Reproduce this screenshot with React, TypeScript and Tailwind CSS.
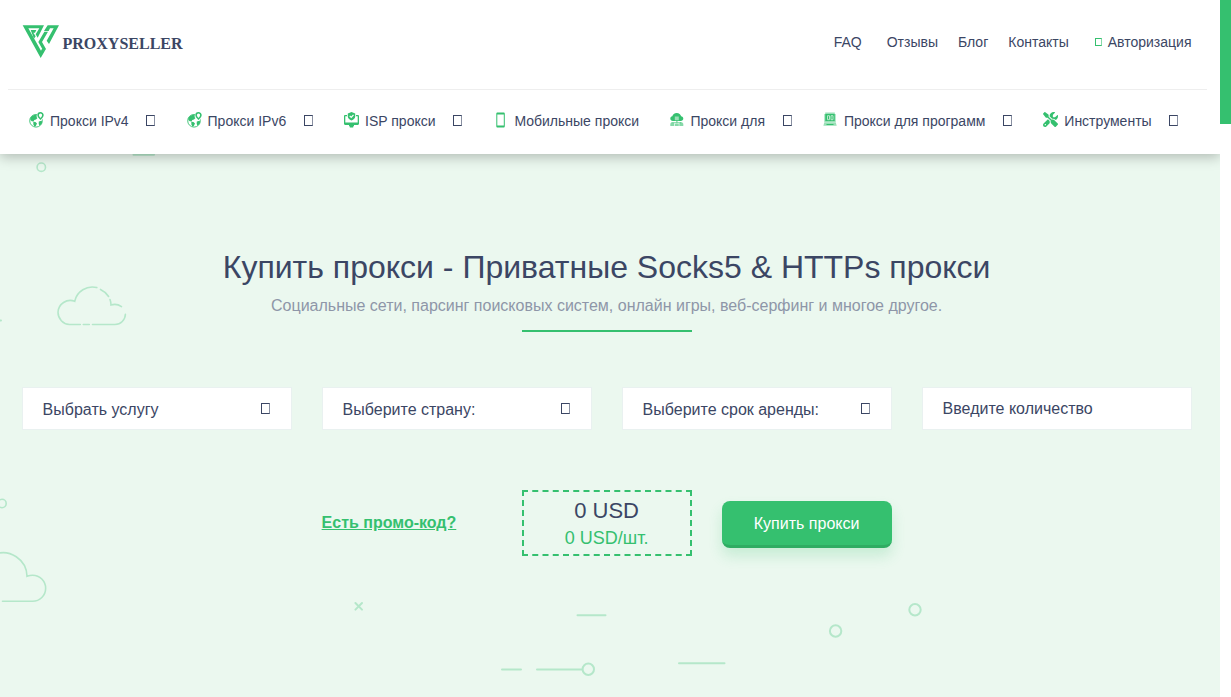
import type { ReactNode } from 'react';
import clsx from 'clsx';
import { FaScrewdriverWrench } from 'react-icons/fa6';

function Logo() {
  return (
    <a href="#" className="flex items-start">
      <svg width="38" height="33" viewBox="0 0 114 99" className="text-[#35c06f]" fill="currentColor">
        <path d="M2 1h64L47 38l-6-10 11-18H19l38 67 4-7 6 10-11 19z" />
        <path d="M26 15h17l-4 8h-5l7 11-5 7z" />
        <path d="M77 1h34L81 57l-7-10L95 10H84l-4 8H66z" />
        <path d="M78 20H67L49 51l17 30 6-9-12-21z" />
      </svg>
      <span className="ml-[2.500px] mt-[9px] font-['Liberation_Serif',serif] text-[16px] leading-[20px] font-bold">
        PROXYSELLER
      </span>
    </a>
  );
}

function GlobeIcon() {
  return (
    <svg width="15" height="16" viewBox="0 0 15 16" fill="none">
      <circle cx="7" cy="8.800" r="6.300" stroke="currentColor" strokeWidth=".9" />
      <path
        d="M1.200 6.500C2.200 4.500 3.800 3.200 6 2.800l2 .7-.5 1.500 1 1-1.500 1.500-1.700.5-.8 1.500-1.700-.3-1.300-1zM4.300 9.800l2.200.3L8 11.500l-1.200 2.400-1.200.9-1.200-2.100zM9.800 9.500l2.700-.8.7 1.300-.7 2-2 1.800-.8-1.800z"
        fill="currentColor"
      />
      <path d="M11.500 9S15 6 15 3.500a3.500 3.500 0 0 0-7 0C8 6 11.500 9 11.500 9z" fill="#fff" />
      <path
        d="M11.500 7S13.900 4.900 13.900 3.200a2.400 2.400 0 0 0-4.800 0C9.100 4.900 11.500 7 11.500 7z"
        stroke="currentColor"
        strokeWidth="1.600"
      />
    </svg>
  );
}

function MonitorIcon() {
  return (
    <svg width="15" height="16" viewBox="0 0 15 16" fill="currentColor">
      <path d="M0 4.200C0 3.500.5 3 1.200 3H3v1.200H1.300v6.300h12.400V4.200H12V3h1.800c.7 0 1.200.5 1.200 1.200v7.600c0 .7-.5 1.200-1.200 1.200H10v1.300h-.8v1.200H5.800v-1.200H5V13H1.200C.5 13 0 12.500 0 11.800z" />
      <path d="M7.500 0L11.200 1.400v2.800c0 2-1.500 3.500-3.700 4.300C5.300 7.700 3.800 6.200 3.800 4.200V1.400z" />
      <path d="M5.700 3.900l1.500 1.500 2.300-2.600" fill="none" stroke="#fff" strokeWidth="1.200" />
    </svg>
  );
}

function PhoneIcon() {
  return (
    <svg width="15" height="16" viewBox="0 0 15 16" fill="currentColor">
      <path
        fillRule="evenodd"
        d="M4.600.5h5.900c.8 0 1.300.5 1.300 1.300v12.400c0 .8-.5 1.300-1.300 1.300H4.600c-.8 0-1.300-.5-1.300-1.300V1.800c0-.8.5-1.300 1.300-1.300zM4.300 2.500v11h6.500v-11z"
      />
    </svg>
  );
}

function CloudIcon() {
  return (
    <svg width="14" height="15" viewBox="0 0 14 15" fill="currentColor">
      <path d="M3 9C1.300 9 .3 8 .3 6.600c0-1.300.8-2.200 2-2.400C2.900 2.500 4.300 1 6.700 1s3.900 1.500 4.400 3.200c1.300.2 2.200 1.100 2.200 2.400C13.300 8 12.200 9 10.700 9z" />
      <path d="M4.800 4.500h4v3.800h-4z" fill="#9bdfb7" />
      <path d="M6.300 8.500h1.200v3H6.300zM2.500 10.300h8.600v.9H2.500z" opacity=".7" />
      <path d="M.3 14v-2.200l1-1.500h1.800l1 1.500V14zM4.800 14v-2.200h4V14zM9.300 14v-2.200l1-1.500h1.800l1.200 1.500V14z" opacity=".6" />
    </svg>
  );
}

function LaptopIcon() {
  return (
    <svg width="15" height="15" viewBox="0 0 15 15" fill="currentColor">
      <path d="M2.200.6h9.600v1.400H2.200zM1.300 2h11.400v8H1.300z" opacity=".5" />
      <path d="M2.300 2h9.400v7H2.300z" />
      <path d="M4.500 3.700h2v4h-2zM8 3.700h2v4H8z" fill="none" stroke="#b7e9cb" />
      <path d="M1.300 10.200h11.400l1 3.600H.4z" opacity=".5" />
      <path d="M3.500 12h7v1h-7z" />
    </svg>
  );
}

// empty glyph box of the missing icon font
function Glyph({ className, small }: { className?: string; small?: boolean }) {
  return (
    <i
      className={clsx(
        'block shrink-0 border border-current border-r-current/60',
        small ? 'h-[8px] w-[7px]' : 'h-[11px] w-[9px]',
        className
      )}
    />
  );
}

const topLinks = [
  { label: 'FAQ', className: 'mr-[25px]' },
  { label: 'Отзывы', className: 'mr-[20px]' },
  { label: 'Блог', className: 'mr-[20px]' },
  { label: 'Контакты', className: 'mr-[26px]' },
];

const menu: { label: string; icon: ReactNode; arrow: boolean }[] = [
  { label: 'Прокси IPv4', icon: <GlobeIcon />, arrow: true },
  { label: 'Прокси IPv6', icon: <GlobeIcon />, arrow: true },
  { label: 'ISP прокси', icon: <MonitorIcon />, arrow: true },
  { label: 'Мобильные прокси', icon: <PhoneIcon />, arrow: false },
  { label: 'Прокси для', icon: <CloudIcon />, arrow: true },
  { label: 'Прокси для программ', icon: <LaptopIcon />, arrow: true },
  { label: 'Инструменты', icon: <FaScrewdriverWrench className="h-[15px] w-[15px]" />, arrow: true },
];

const selects = ['Выбрать услугу', 'Выберите страну:', 'Выберите срок аренды:'];

function Header() {
  return (
    <header className="relative z-10 h-[154px] bg-white pr-[13px] pl-[8px] text-[14px] leading-[20px] shadow-[0_3px_12px_rgba(0,0,0,0.25)]">
      <div className="flex h-[90px] items-start justify-between border-b border-[#eeeeee] pt-[25px] pr-[15.500px] pl-[14px]">
        <Logo />
        <nav className="mt-[7px] flex items-center">
          {topLinks.map((link) => (
            <a key={link.label} href="#" className={link.className}>
              {link.label}
            </a>
          ))}
          <a href="#" className="flex items-center">
            <Glyph small className="mr-[6px] text-[#35c06f]" />
            Авторизация
          </a>
        </nav>
      </div>
      <nav className="flex items-center gap-[31.4px] pt-[21px] pl-[21px]">
        {menu.map((item) => (
          <a key={item.label} href="#" className="flex items-center whitespace-nowrap">
            <span className="mr-[6px] -mt-[3px] text-[#35c06f]">{item.icon}</span>
            {item.label}
            {item.arrow && <Glyph className="-mt-[2px] ml-[17.500px]" />}
          </a>
        ))}
      </nav>
    </header>
  );
}

function Decorations() {
  return (
    <svg
      className="absolute inset-0"
      width="1220"
      height="697"
      viewBox="0 0 1220 697"
      fill="none"
      stroke="#b5e7ca"
      strokeWidth="2"
      strokeLinecap="round"
    >
      <path d="M133.500 154.800h20.500M-4 320.500h5M577.500 615.200h28M502 669.500h19M537 669.500h45M679 663.200h45.500" />
      <path d="M355.400 603l6.600 6.600M362 603l-6.600 6.600" />
      <circle cx="41.300" cy="167.200" r="4.200" strokeWidth="1.600" />
      <circle cx="2" cy="503.500" r="4.200" strokeWidth="1.600" />
      <circle cx="588.300" cy="669.300" r="5.700" />
      <circle cx="835.600" cy="631" r="5.700" />
      <circle cx="915" cy="609.700" r="5.700" />
      <g strokeWidth="1.600">
        <path d="M96.800 287.600A18 18 0 0 0 74.700 301.300A12.300 12.300 0 0 0 58 312.300A12.200 12.200 0 0 0 69.500 324.500H80.300M83.300 324.500h6M92.500 324.500H115A10.500 10.500 0 0 0 125.400 314.200M100.500 289.400A19 19 0 0 1 108.600 296.500M110 299.500Q111 302 111 305A12 12 0 0 1 121.500 306.600" />
        <path d="M-6 554.500A24 24 0 0 1 27 576.300Q30 575.200 32.600 575.200A13 13 0 0 1 32.600 601.300H2.500" />
      </g>
    </svg>
  );
}

function OrderForm() {
  return (
    <form className="mt-[55px]">
      <div className="grid grid-cols-4 gap-[30px]">
        {selects.map((label) => (
          <div
            key={label}
            className="flex h-[43px] items-center justify-between border border-[#e9f1f0] bg-white pr-[21px] pl-[20px]"
          >
            <span className="pt-[2px] leading-[20px]">{label}</span>
            <Glyph />
          </div>
        ))}
        <input
          type="text"
          placeholder="Введите количество"
          className="h-[43px] w-full border border-[#e9f1f0] bg-white px-[20px] outline-none placeholder:text-[#3b4664]"
        />
      </div>

      <div className="mt-[60px] flex items-start justify-center gap-[30px]">
        <a href="#" className="mt-[23px] w-[170px] leading-[20px] font-bold text-[#35c06f] underline">
          Есть промо-код?
        </a>
        <div className="h-[66px] w-[170px] border-2 border-dashed border-[#35c06f] pt-[5px] text-center">
          <p className="text-[22px] leading-[28px]">0 USD</p>
          <p className="text-[18px] leading-[26px] text-[#35c06f]">0 USD/шт.</p>
        </div>
        <button
          type="button"
          className="mt-[11px] h-[47px] w-[170px] rounded-[8px] border-b-3 border-[#2fac62] bg-[#35c06f] pt-[2px] text-white shadow-[0_8px_14px_rgba(53,192,111,0.2)]"
        >
          Купить прокси
        </button>
      </div>
    </form>
  );
}

export default function App() {
  return (
    <div className="flex h-[697px] w-[1231px] overflow-hidden bg-white font-['Liberation_Sans',Arial,sans-serif] text-[16px] text-[#3b4664]">
      <div className="relative w-[1220px] shrink-0 overflow-hidden bg-[#ebf8ef]">
        <Decorations />
        <Header />
        <main className="relative mt-[93px] pr-[28.400px] pl-[21.600px]">
          <div className="flex flex-col items-center text-center">
            <h1 className="text-[32px] leading-[40px]">Купить прокси - Приватные Socks5 &amp; HTTPs прокси</h1>
            <p className="mt-[9px] leading-[20px] text-[#8e96a8]">
              Социальные сети, парсинг поисковых систем, онлайн игры, веб-серфинг и многое другое.
            </p>
            <div className="mt-[14px] h-[2px] w-[170px] bg-[#35c06f]" />
          </div>
          <OrderForm />
        </main>
      </div>
      <div className="relative z-20 h-[124px] w-[11px] bg-[#35c06f] shadow-[0_0_30px_-14px_rgba(0,0,0,0.3)]" />
    </div>
  );
}
